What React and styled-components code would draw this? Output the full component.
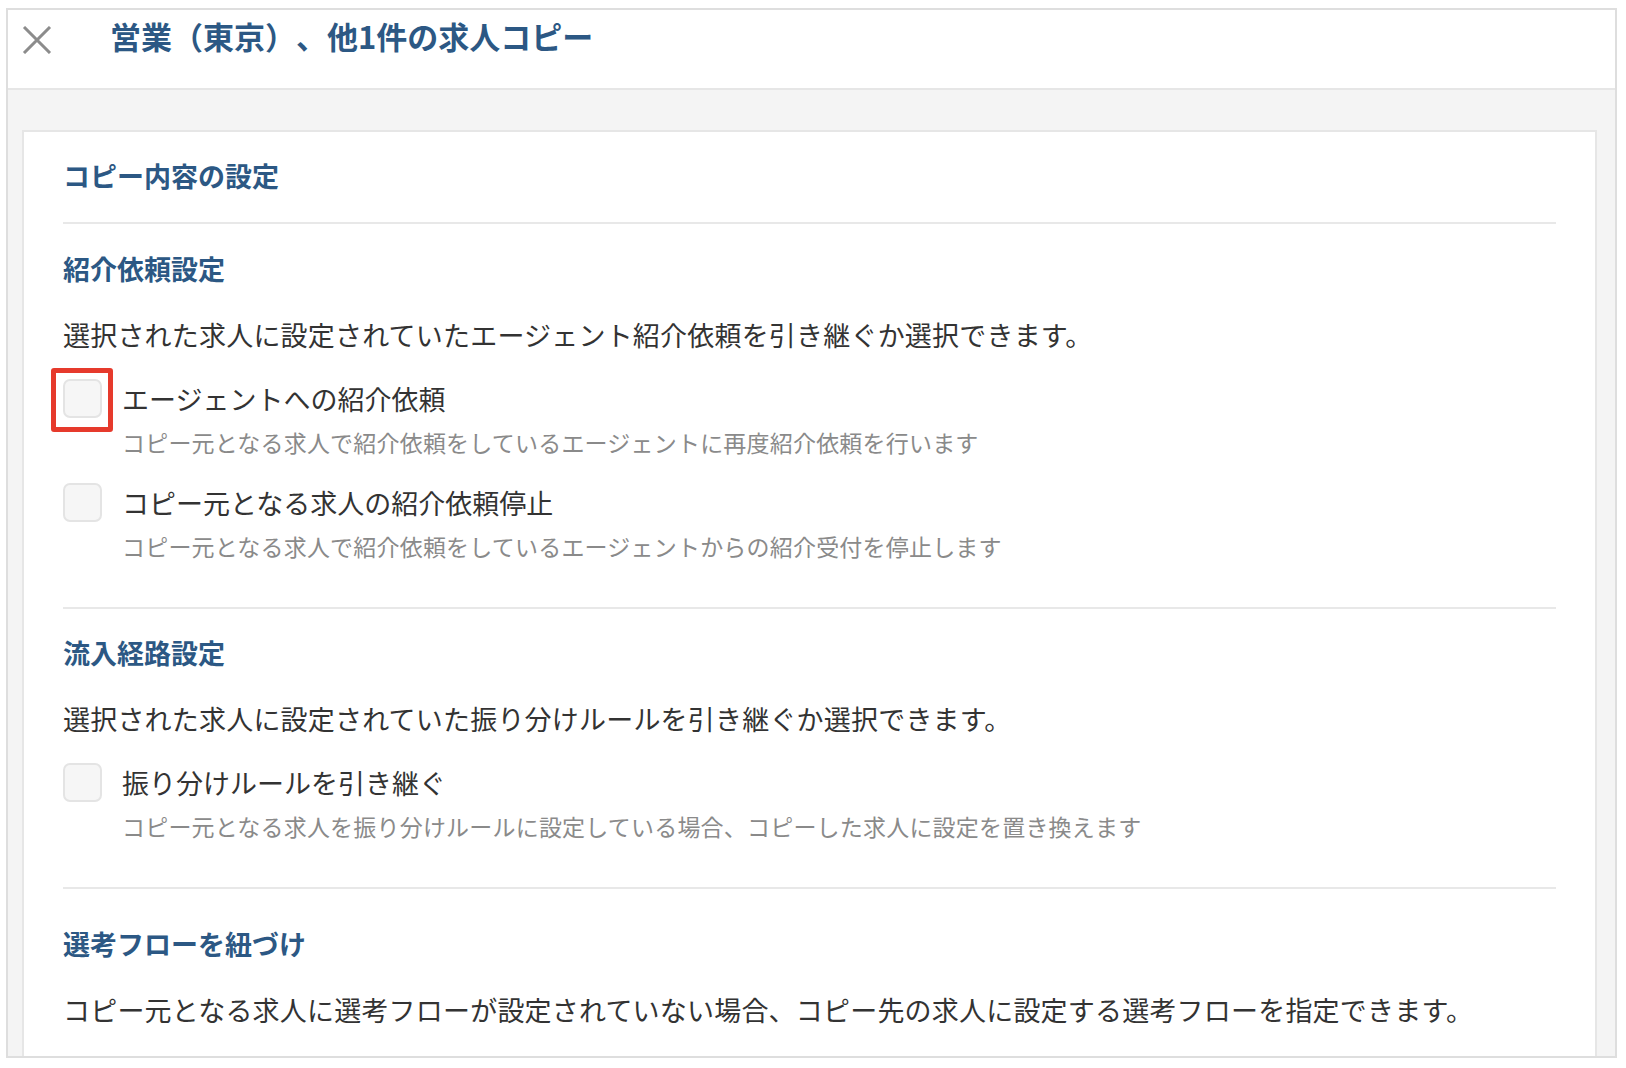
import styled, { createGlobalStyle } from "styled-components";

const GlobalStyle = createGlobalStyle`
    html, body {
        margin: 0;
        padding: 0;
        background: #ffffff;
    }
    body {
        font-family: "Noto Sans CJK JP", "Noto Sans", sans-serif;
        color: #333333;
        text-spacing-trim: space-all;
    }
`

const Frame = styled.div`
    margin: 8px 9px 0 6px;
    height: 1050px;
    box-sizing: border-box;
    border: 2px solid #dedede;
    overflow: hidden;
    display: flex;
    flex-direction: column;
`

const Header = styled.div`
    flex-shrink: 0;
    height: 80px;
    box-sizing: border-box;
    padding: 0 0 26px 14px;
    display: flex;
    align-items: center;
    gap: 58px;
    background: #ffffff;
    border-bottom: 2px solid #e6e6e6;
`

const CloseButton = styled.button`
    width: 30px;
    height: 30px;
    padding: 0;
    margin-top: 8px;
    border: none;
    background: none;
    display: flex;
    align-items: center;
    justify-content: center;
    cursor: pointer;
`

const Title = styled.h1`
    margin: 0;
    font-size: 31px;
    line-height: 40px;
    font-weight: 700;
    color: #2c5884;
`

const Body = styled.div`
    flex: 1;
    background: #f4f4f4;
    padding: 40px 18px 0 14px;
`

const Panel = styled.div`
    background: #ffffff;
    border: 2px solid #e6e6e6;
    border-bottom: none;
    padding: 24px 39px 0;
    min-height: 100%;
    box-sizing: border-box;
`

const PageHeading = styled.h2`
    margin: 0 0 26px;
    font-size: 27px;
    line-height: 40px;
    font-weight: 700;
    color: #2c5884;
`

const Section = styled.section`
    border-top: 2px solid #e8e8e8;
    padding-top: ${(p) => p.$top || 25}px;
    padding-bottom: 45px;
`

const SectionTitle = styled.h3`
    margin: 0;
    font-size: 27px;
    line-height: 40px;
    font-weight: 700;
    color: #2c5884;
`

const Description = styled.p`
    margin: 26px 0 0;
    font-size: 27px;
    line-height: 40px;
    letter-spacing: 0.2px;
    color: #333333;
`

const OptionList = styled.div`
    margin-top: 24px;
    display: flex;
    flex-direction: column;
    gap: 25px;
`

const Option = styled.label`
    display: grid;
    grid-template-columns: 39px 1fr;
    column-gap: 20px;
    row-gap: 8px;
    cursor: pointer;
`

const CheckboxWrap = styled.span`
    position: relative;
    width: 39px;
    height: 39px;
`

const Checkbox = styled.span`
    display: block;
    width: 39px;
    height: 39px;
    box-sizing: border-box;
    border: 2px solid #e4e4e4;
    border-radius: 7px;
    background: #f6f6f6;
`

const Highlight = styled.span`
    position: absolute;
    left: -12px;
    top: -11px;
    width: 62px;
    height: 64px;
    box-sizing: border-box;
    border: 5px solid #e63a2c;
    border-radius: 3px;
`

const OptionLabel = styled.span`
    font-size: 27px;
    line-height: 39px;
    color: #333333;
`

const OptionNote = styled.span`
    grid-column: 2;
    font-size: 23px;
    line-height: 32px;
    letter-spacing: 0.2px;
    color: #8a8a8a;
`

const CloseIcon = () => (
  <svg width="30" height="28" viewBox="0 0 30 28">
    <path d="M2 1 L28 27 M28 1 L2 27" stroke="#8c8c8c" strokeWidth="3" fill="none" />
  </svg>
)

const SECTIONS = [
  {
    title: "紹介依頼設定",
    desc: "選択された求人に設定されていたエージェント紹介依頼を引き継ぐか選択できます。",
    options: [
      {
        label: "エージェントへの紹介依頼",
        note: "コピー元となる求人で紹介依頼をしているエージェントに再度紹介依頼を行います",
        highlight: true,
      },
      {
        label: "コピー元となる求人の紹介依頼停止",
        note: "コピー元となる求人で紹介依頼をしているエージェントからの紹介受付を停止します",
      },
    ],
  },
  {
    title: "流入経路設定",
    top: 24,
    desc: "選択された求人に設定されていた振り分けルールを引き継ぐか選択できます。",
    options: [
      {
        label: "振り分けルールを引き継ぐ",
        note: "コピー元となる求人を振り分けルールに設定している場合、コピーした求人に設定を置き換えます",
      },
    ],
  },
  {
    title: "選考フローを紐づけ",
    top: 35,
    desc: "コピー元となる求人に選考フローが設定されていない場合、コピー先の求人に設定する選考フローを指定できます。",
    options: [],
  },
]

const App = () => {
  return (
    <>
      <GlobalStyle />
      <Frame>
        <Header>
          <CloseButton aria-label="閉じる">
            <CloseIcon />
          </CloseButton>
          <Title>営業（東京）、他1件の求人コピー</Title>
        </Header>
        <Body>
          <Panel>
            <PageHeading>コピー内容の設定</PageHeading>
            {SECTIONS.map((section) => (
              <Section key={section.title} $top={section.top}>
                <SectionTitle>{section.title}</SectionTitle>
                <Description>{section.desc}</Description>
                {section.options.length > 0 && (
                  <OptionList>
                    {section.options.map((option) => (
                      <Option key={option.label}>
                        <CheckboxWrap>
                          <Checkbox />
                          {option.highlight && <Highlight />}
                        </CheckboxWrap>
                        <OptionLabel>{option.label}</OptionLabel>
                        <OptionNote>{option.note}</OptionNote>
                      </Option>
                    ))}
                  </OptionList>
                )}
              </Section>
            ))}
          </Panel>
        </Body>
      </Frame>
    </>
  )
}

export default App
